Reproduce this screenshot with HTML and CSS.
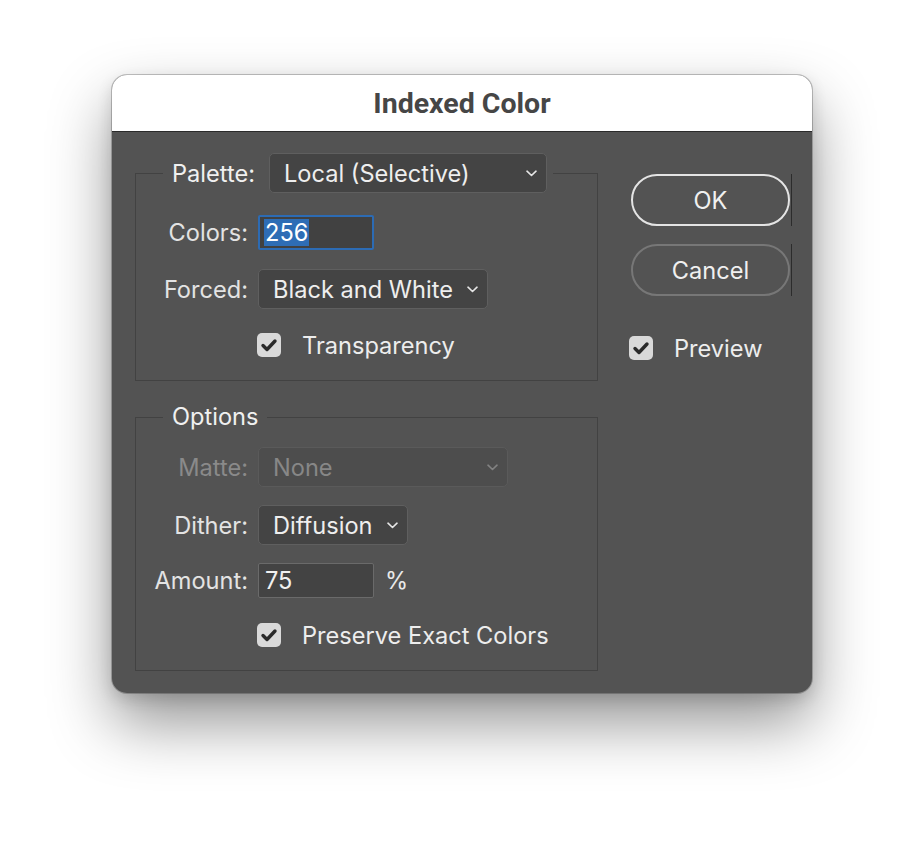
FILE: index.html
```html
<!DOCTYPE html>
<html lang="en">
<head>
<meta charset="utf-8">
<title>Indexed Color</title>
<link rel="stylesheet" href="styles.css">
</head>
<body>
<div class="window">
  <div class="titlebar">Indexed Color</div>
  <div class="content">
    <div class="left">
      <fieldset class="group group-palette">
        <legend class="legend legend-select">
          <span class="legend-label">Palette:</span>
          <span class="select select-palette">
            <span class="select-text">Local (Selective)</span>
            <svg class="chev" width="11" height="7" viewBox="0 0 11 7"><path d="M1 1.2 L5.5 5.5 L10 1.2" fill="none" stroke="currentColor" stroke-width="1.6" stroke-linecap="round" stroke-linejoin="round"/></svg>
          </span>
        </legend>
        <div class="row row-colors">
          <span class="label">Colors:</span>
          <span class="input input-focus"><span class="sel">256</span></span>
        </div>
        <div class="row row-forced">
          <span class="label">Forced:</span>
          <span class="select select-auto">
            <span class="select-text">Black and White</span>
            <svg class="chev" width="11" height="7" viewBox="0 0 11 7"><path d="M1 1.2 L5.5 5.5 L10 1.2" fill="none" stroke="currentColor" stroke-width="1.6" stroke-linecap="round" stroke-linejoin="round"/></svg>
          </span>
        </div>
        <div class="row row-check row-transp">
          <span class="label"></span>
          <span class="checkbox"><svg width="24" height="24" viewBox="0 0 24 24"><path d="M6 12.5 L10 16.5 L18 8" fill="none" stroke="#2a2a2a" stroke-width="3.4" stroke-linecap="round" stroke-linejoin="round"/></svg></span>
          <span class="check-text">Transparency</span>
        </div>
      </fieldset>

      <fieldset class="group group-options">
        <legend class="legend legend-text">Options</legend>
        <div class="row row-matte disabled">
          <span class="label">Matte:</span>
          <span class="select select-matte">
            <span class="select-text">None</span>
            <svg class="chev" width="11" height="7" viewBox="0 0 11 7"><path d="M1 1.2 L5.5 5.5 L10 1.2" fill="none" stroke="currentColor" stroke-width="1.6" stroke-linecap="round" stroke-linejoin="round"/></svg>
          </span>
        </div>
        <div class="row row-dither">
          <span class="label">Dither:</span>
          <span class="select select-auto">
            <span class="select-text">Diffusion</span>
            <svg class="chev" width="11" height="7" viewBox="0 0 11 7"><path d="M1 1.2 L5.5 5.5 L10 1.2" fill="none" stroke="currentColor" stroke-width="1.6" stroke-linecap="round" stroke-linejoin="round"/></svg>
          </span>
        </div>
        <div class="row row-amount">
          <span class="label">Amount:</span>
          <span class="input"><span class="val">75</span></span>
          <span class="unit">%</span>
        </div>
        <div class="row row-check row-preserve">
          <span class="label"></span>
          <span class="checkbox"><svg width="24" height="24" viewBox="0 0 24 24"><path d="M6 12.5 L10 16.5 L18 8" fill="none" stroke="#2a2a2a" stroke-width="3.4" stroke-linecap="round" stroke-linejoin="round"/></svg></span>
          <span class="check-text">Preserve Exact Colors</span>
        </div>
      </fieldset>
    </div>

    <div class="right">
      <div class="btn-wrap"><span class="btn btn-ok">OK</span></div>
      <div class="btn-wrap btn-wrap-cancel"><span class="btn btn-cancel">Cancel</span></div>
      <div class="preview">
        <span class="checkbox"><svg width="24" height="24" viewBox="0 0 24 24"><path d="M6 12.5 L10 16.5 L18 8" fill="none" stroke="#2a2a2a" stroke-width="3.4" stroke-linecap="round" stroke-linejoin="round"/></svg></span>
        <span class="check-text">Preview</span>
      </div>
    </div>
  </div>
</div>
</body>
</html>
```

FILE: styles.css
```css
html, body {
  margin: 0;
  padding: 0;
  background: #ffffff;
}

body {
  width: 924px;
  height: 842px;
  overflow: hidden;
  font-family: Inter, "Noto Sans", "Liberation Sans", sans-serif;
  font-size: 23.6px;
  color: #e9e9e9;
}

.window {
  margin: 75px 0 0 112px;
  width: 700px;
  border-radius: 15px;
  overflow: hidden;
  background: #535353;
  box-shadow: 0 0 0 1px rgba(0, 0, 0, 0.22), 0 30px 62px rgba(0, 0, 0, 0.42), 0 6px 16px rgba(0, 0, 0, 0.14);
}

.titlebar {
  height: 56px;
  background: #ffffff;
  border-bottom: 1px solid #2a2a2a;
  display: flex;
  align-items: center;
  justify-content: center;
  font-family: Roboto, "Liberation Sans", sans-serif;
  font-weight: 700;
  font-size: 28.5px;
  color: #464646;
}

.content {
  display: flex;
  gap: 33px;
  padding: 21px 0 22px 23px;
}

.left {
  width: 463px;
  display: flex;
  flex-direction: column;
}

.group {
  margin: 0;
  padding: 0 0 23px 0;
  border: 1px solid #424242;
  min-width: 0;
}

.group-options {
  margin-top: 23px;
}

.legend {
  margin-left: 27px;
  padding: 0 6px 0 9px;
}

.legend-select {
  display: flex;
  align-items: center;
  gap: 14px;
}

.legend-label {
  color: #f0f0f0;
}

.legend-text {
  padding: 0 9px;
  line-height: 26px;
  height: 26px;
  color: #f0f0f0;
}

.row {
  display: flex;
  align-items: center;
}

.label {
  width: 112px;
  flex: none;
  text-align: right;
  margin-right: 10px;
  color: #e3e3e3;
}

.row-colors { margin-top: 22px; height: 35px; }
.row-forced { margin-top: 19px; height: 40px; }
.row-transp { margin-top: 24px; height: 24px; }
.row-matte { margin-top: 17px; height: 40px; }
.row-dither { margin-top: 18px; height: 40px; }
.row-amount { margin-top: 18px; height: 35px; }
.row-preserve { margin-top: 25px; height: 24px; }

.select {
  box-sizing: border-box;
  height: 40px;
  display: flex;
  align-items: center;
  background: #444444;
  border: 1.5px solid #5f5f5f;
  border-radius: 5px;
  padding: 0 9px 0 14px;
  color: #eeeeee;
}

.select-text {
  flex: 1;
  white-space: nowrap;
}

.chev {
  flex: none;
  color: #e6e6e6;
}

.select-palette {
  width: 278px;
}

.select-auto .select-text {
  margin-right: 14px;
}

.select-matte {
  width: 250px;
}

.disabled .label {
  color: #8a8a8a;
}

.disabled .select {
  background: #4d4d4d;
  border-color: #5a5a5a;
  color: #878787;
}

.disabled .chev {
  color: #828282;
}

.input {
  box-sizing: border-box;
  width: 116px;
  height: 35px;
  display: flex;
  align-items: center;
  background: #434343;
  border: 1.5px solid #6a6a6a;
  border-radius: 2px;
  padding-left: 6px;
  color: #f0f0f0;
}

.input-focus {
  border: 2px solid #2c6bb4;
  background: #414141;
  padding-left: 4px;
}

.sel {
  background: #2e6db5;
  color: #ffffff;
  line-height: 27px;
  padding: 0 1px;
}

.unit {
  margin-left: 11px;
  color: #e9e9e9;
}

.checkbox {
  box-sizing: border-box;
  width: 24px;
  height: 24px;
  flex: none;
  background: #d9d9d9;
  border-radius: 5px;
  display: flex;
}

.row-check .checkbox {
  margin-left: -1px;
}

.check-text {
  margin-left: 21px;
  color: #ededed;
}

.right {
  width: 161px;
  padding-top: 21px;
  display: flex;
  flex-direction: column;
}

.btn-wrap {
  display: flex;
  border-right: 1px solid #2c2c2c;
  width: 161px;
  box-sizing: border-box;
}

.btn-wrap-cancel {
  margin-top: 18px;
}

.btn {
  box-sizing: border-box;
  width: 159px;
  height: 52px;
  display: flex;
  align-items: center;
  justify-content: center;
  border-radius: 26px;
  color: #f0f0f0;
}

.btn-ok {
  border: 2px solid #e4e4e4;
}

.btn-cancel {
  border: 2px solid #777777;
}

.preview {
  margin-top: 40px;
  margin-left: -2px;
  display: flex;
  align-items: center;
  height: 24px;
}
```
